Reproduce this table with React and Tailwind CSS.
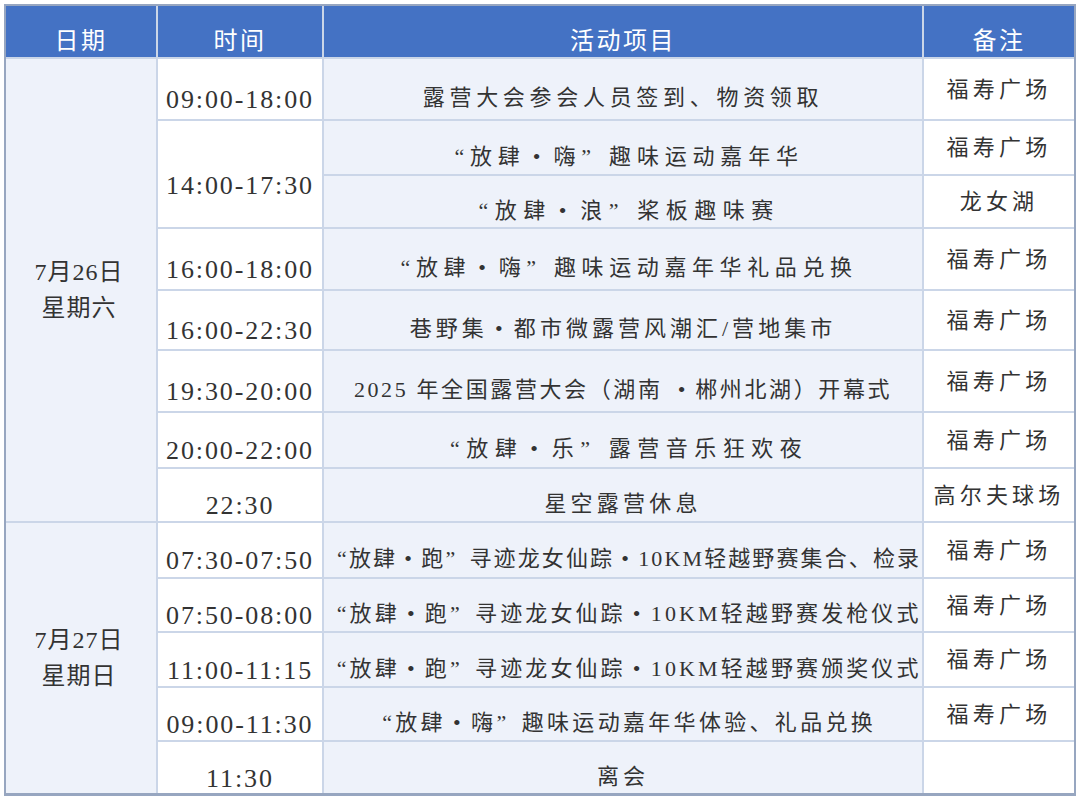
import React from "react";

const RS = {
  2: "row-start-2",
  3: "row-start-3",
  4: "row-start-4",
  5: "row-start-5",
  6: "row-start-6",
  7: "row-start-7",
  8: "row-start-8",
  9: "row-start-9",
  10: "row-start-10",
  11: "row-start-11",
  12: "row-start-12",
  13: "row-start-13",
  14: "row-start-14",
};

const ACTS = [
  ["露营大会参会人员签到、物资领取", "福寿广场", "tracking-[4.7px]", "mr-[4.7px]"],
  ["“放肆•嗨”趣味运动嘉年华", "福寿广场", "tracking-[5.8px]", "mr-[5.8px]"],
  ["“放肆•浪”桨板趣味赛", "龙女湖", "tracking-[6.5px]", "mr-[6.5px]"],
  ["“放肆•嗨”趣味运动嘉年华礼品兑换", "福寿广场", "tracking-[5.6px]", "mr-[5.6px]"],
  ["巷野集•都市微露营风潮汇/营地集市", "福寿广场", "tracking-[4px]", "mr-[4px]"],
  ["2025 年全国露营大会（湖南 •郴州北湖）开幕式", "福寿广场", "tracking-[2.6px]", "mr-[2.6px]"],
  ["“放肆•乐”露营音乐狂欢夜", "福寿广场", "tracking-[6.5px]", "mr-[6.5px]"],
  ["星空露营休息", "高尔夫球场", "tracking-[4.2px]", "mr-[4.2px]"],
  ["“放肆•跑”寻迹龙女仙踪•10KM轻越野赛集合、检录", "福寿广场", "tracking-[2.1px]", "mr-[2.1px]"],
  ["“放肆•跑”寻迹龙女仙踪•10KM轻越野赛发枪仪式", "福寿广场", "tracking-[3.1px]", "mr-[3.1px]"],
  ["“放肆•跑”寻迹龙女仙踪•10KM轻越野赛颁奖仪式", "福寿广场", "tracking-[3.1px]", "mr-[3.1px]"],
  ["“放肆•嗨”趣味运动嘉年华体验、礼品兑换", "福寿广场", "tracking-[3.3px]", "mr-[3.3px]"],
  ["离会", "", "tracking-[4px]", "mr-[4px]"],
];

const TIMES = [
  ["09:00-18:00", 2, ""],
  ["14:00-17:30", 3, "row-span-2"],
  ["16:00-18:00", 5, ""],
  ["16:00-22:30", 6, ""],
  ["19:30-20:00", 7, ""],
  ["20:00-22:00", 8, ""],
  ["22:30", 9, ""],
  ["07:30-07:50", 10, ""],
  ["07:50-08:00", 11, ""],
  ["11:00-11:15", 12, ""],
  ["09:00-11:30", 13, ""],
  ["11:30", 14, ""],
];

function Txt({ s, mr }) {
  const out = [];
  let i = 0;
  for (const ch of s) {
    if (ch === "“") {
      out.push(
        <span key={i} className={`inline-block w-[1em] text-right tracking-normal ${mr}`}>“</span>
      );
    } else if (ch === "”") {
      out.push(
        <span key={i} className={`inline-block w-[1em] text-left tracking-normal ${mr}`}>”</span>
      );
    } else if (ch === "•") {
      out.push(
        <span key={i} className={`inline-block w-[1em] text-center tracking-normal ${mr}`}>•</span>
      );
    } else {
      out.push(<React.Fragment key={i}>{ch}</React.Fragment>);
    }
    i++;
  }
  return <span className="whitespace-pre">{out}</span>;
}

export default function App() {
  return (
    <div className="bg-white w-[1080px] h-[799px] overflow-hidden pt-[4px] pl-[4px]">
      <div className="grid w-[1072px] grid-cols-[150px_164px_598px_150px] grid-rows-[51px_60px_53px_51px_60px_58px_60px_54px_52px_54px_52px_53px_52px_51px] gap-[2px] bg-[#cbd6e8] border-2 border-b-[3px] border-[#97a6c0] font-['Liberation_Serif','Noto_Sans_CJK_SC',serif] text-[#333333]">
        {/* header */}
        {["日期", "时间", "活动项目", "备注"].map((h) => (
          <div
            key={h}
            className="row-start-1 bg-[#4472c4] text-white text-[24px] tracking-[2.5px] flex items-center justify-center pt-[14px] font-['Noto_Sans_CJK_SC',sans-serif]"
          >
            {h}
          </div>
        ))}

        {/* dates */}
        <div className="col-start-1 row-start-2 row-span-8 bg-[#eef2fa] flex flex-col items-center justify-center pr-[4px] text-[24px] leading-[36px] tracking-[1px]">
          <div>7月26日</div>
          <div>星期六</div>
        </div>
        <div className="col-start-1 row-start-10 row-span-5 bg-[#eef2fa] flex flex-col items-center justify-center pr-[4px] text-[24px] leading-[36px] tracking-[1px]">
          <div>7月27日</div>
          <div>星期日</div>
        </div>

        {/* times */}
        {TIMES.map(([t, r, span]) => (
          <div
            key={t + r}
            className={`col-start-2 ${RS[r]} ${span} bg-white flex items-center justify-center text-[26px] tracking-[1.9px] ${span ? "pt-[22px]" : "pt-[21px]"}`}
          >
            {t}
          </div>
        ))}

        {/* activities and remarks */}
        {ACTS.map(([a, rem, ls, mr], idx) => (
          <React.Fragment key={idx}>
            <div
              className={`col-start-3 ${RS[idx + 2]} bg-[#eef2fa] flex items-center justify-center text-[22px] whitespace-nowrap pt-[17px] ${ls}`}
            >
              <Txt s={a} mr={mr} />
            </div>
            <div
              className={`col-start-4 ${RS[idx + 2]} bg-white flex items-center justify-center text-[22px] tracking-[4.2px]`}
            >
              {rem}
            </div>
          </React.Fragment>
        ))}
      </div>
    </div>
  );
}
